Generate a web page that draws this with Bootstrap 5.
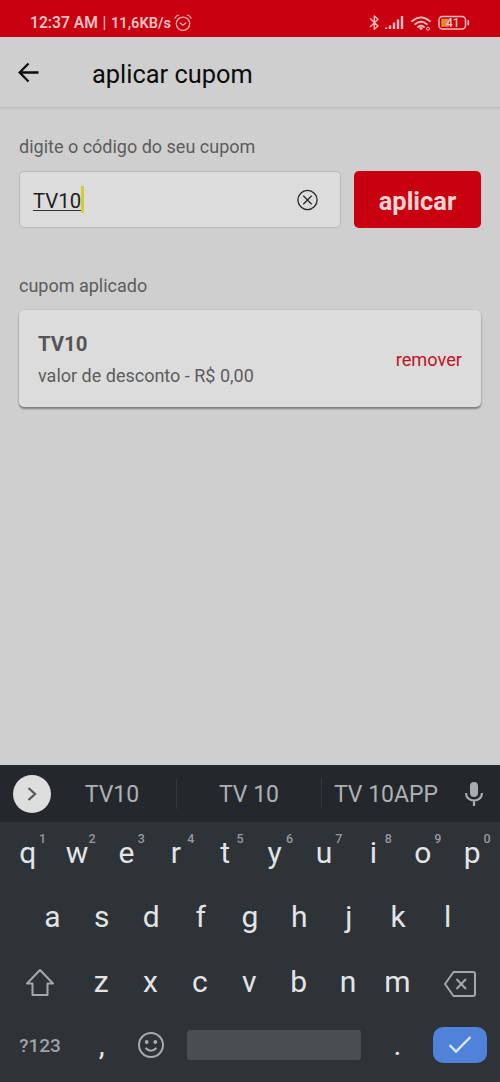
<!DOCTYPE html>
<html lang="pt-BR">
<head>
<meta charset="utf-8">
<meta name="viewport" content="width=device-width, initial-scale=1">
<title>aplicar cupom</title>
<link href="https://cdn.jsdelivr.net/npm/bootstrap@5.3.0/dist/css/bootstrap.min.css" rel="stylesheet">
<style>
body{font-family:Roboto,"Liberation Sans",sans-serif;background:#cfcfcf;color:#5c5c5c;height:1082px;overflow:hidden;line-height:1}
svg{display:block;flex:none}
.status{height:37px;background:#c8000f;color:#f6c3c3;padding:9px 29px 0 30px;font-size:15.6px;font-weight:600}
.clock{line-height:18px;padding-top:5px;width:141px}
.rate{font-size:14.6px}
.topbar{height:71px;padding-left:18px;color:#0c0c0c;border-bottom:1px solid #bebebe;box-shadow:0 1px 2px rgba(0,0,0,.06)}
.topbar h1{font-size:25.4px;font-weight:400;margin:5px 0 0 52px;line-height:1}
main{padding:0 19px}
.lbl{font-size:18px;line-height:22px}
.field{width:322px;height:57px;background:#dcdcdc;border:1px solid #b9b9b9;border-radius:5px;padding:0 21px 0 13px;color:#1e1e1e}
.typed{font-size:20.4px;line-height:24px;border-bottom:1px solid #333;height:22px;margin-top:1px}
.caret{width:2.500px;height:27px;background:#d6cc28}
.apply{width:127px;height:57px;border-radius:5px;background:#c8000f;color:#f5d3d3;font-size:25.4px;font-weight:700;border:0;line-height:1}
.apply span{display:block;padding-top:4px}
.coupon{height:97px;background:#dcdcdc;border:0;border-radius:5px;box-shadow:0 2px 2px rgba(0,0,0,.38),0 0 2px rgba(0,0,0,.12);padding:2px 19px 0 19px}
.code{font-size:20.4px;line-height:24px;font-weight:700;color:#555}
.remove{color:#c2121f;font-size:18.2px;padding-top:1px}
.keyboard{height:317px;background:#2e3338;color:#e2e4e6}
.suggest{height:57px;background:#24282c;color:#aeb1b4;font-size:23px}
.more{width:38px;height:38px;background:#dedede;margin-left:13px}
.word{height:31px;padding-top:2px}
.word+.word{border-left:1px solid #34383c}
.keys{padding:0 3px;height:64.5px}
.key{width:49.4px;font-size:30px;text-align:center;position:relative;line-height:36px;flex:none}
.key sup{position:absolute;left:36px;top:-3px;font-size:12.5px;line-height:14px;font-weight:500;color:#96999d}
.sym{font-size:19px;font-weight:500;color:#a0a3a6;width:74px}
.space{width:174px;height:30px;background:#4a4e52;border-radius:3px}
.enter{width:54px;height:36px;background:#4f82d8;border-radius:10px}
</style>
</head>
<body class="d-flex flex-column">
<div class="status d-flex justify-content-between">
  <div class="d-flex" style="gap:3px"><span class="text-nowrap clock d-flex justify-content-between"><span>12:37 AM</span><span class="fw-normal">|</span><span class="rate">11,6KB/s</span></span>
    <svg style="margin-top:5px" width="18" height="18" viewBox="0 0 18 18" fill="none" stroke="#f0a8aa" stroke-width="1.3" stroke-linecap="round"><circle cx="9" cy="9.8" r="6.7"/><path d="M1 4.2Q2 1.7 4.500 1.200M17 4.2Q16 1.7 13.500 1.200M6.200 9L9 11.200L11.800 9"/></svg>
  </div>
  <svg width="102" height="22" viewBox="0 0 102 22" fill="none" stroke="#f6bcbd" stroke-width="1.5" stroke-linejoin="round" stroke-linecap="round">
    <path d="M1.500 9.800L9 17L5.300 20.200V7L9 10.200L1.500 17.400" stroke-width="1.4"/>
    <path d="M17.200 20V18.500M21 20V16.500M25 20V13.500M29 20V10.500M33 20V7" stroke-width="2.400" stroke-linecap="butt"/>
    <path d="M43 12.200Q52 4.500 61 12.200M46 15.200Q52 10.200 58 15.200M49 18Q52 15.600 55 18" stroke-width="1.800"/><path d="M51 19L52 20.200L53 19Z"/>
    <circle cx="59" cy="19.700" r="1.500" stroke-width="1"/>
    <rect x="70" y="7.500" width="26.500" height="12.500" rx="3.500"/><path d="M99.300 12V15.500" stroke-width="1.800"/>
    <rect x="72.300" y="9.800" width="7.500" height="8" fill="#df8a35" stroke="none"/>
    <text x="77" y="18" font-size="12" font-weight="500" fill="#f6c3c3" stroke="none">41</text>
  </svg>
</div>
<header class="topbar d-flex align-items-center flex-shrink-0">
  <svg width="22" height="22" viewBox="0 0 22 22" fill="none" stroke="#0c0c0c" stroke-width="2.300"><path d="M20.500 11.500H2M10.500 2.500L1.700 11.500L10.500 20.500"/></svg>
  <h1>aplicar cupom</h1>
</header>
<main class="flex-grow-1">
  <div class="lbl" style="padding-top:28px">digite o código do seu cupom</div>
  <div class="d-flex justify-content-between" style="margin-top:13px">
    <div class="field d-flex align-items-center">
      <span class="typed">TV10</span><span class="caret"></span>
      <svg class="ms-auto" width="22" height="22" viewBox="0 0 22 22" fill="none" stroke="#2a2a2a" stroke-width="1.300"><circle cx="10.500" cy="11" r="9.600"/><path d="M6.300 6.800L14.700 15.200M14.700 6.800L6.300 15.200"/></svg>
    </div>
    <button class="apply p-0"><span>aplicar</span></button>
  </div>
  <div class="lbl" style="margin-top:47px">cupom aplicado</div>
  <div class="coupon card flex-row align-items-center justify-content-between" style="margin-top:13px">
    <div><div class="code">TV10</div><div class="lbl" style="margin-top:9px">valor de desconto - R$ 0,00</div></div>
    <span class="remove">remover</span>
  </div>
</main>
<section class="keyboard flex-shrink-0">
  <div class="suggest d-flex align-items-center">
    <div class="more rounded-circle d-flex align-items-center justify-content-center"><svg width="12" height="16" viewBox="0 0 12 16" fill="none" stroke="#55585a" stroke-width="2.200"><path d="M2.500 2L9 8L2.500 14"/></svg></div>
    <div class="word d-flex align-items-center justify-content-center" style="width:125px;padding-right:3px">TV10</div>
    <div class="word d-flex align-items-center justify-content-center" style="width:145px">TV 10</div>
    <div class="word d-flex align-items-center justify-content-center text-nowrap" style="width:129px">TV 10APP</div>
    <svg style="margin-left:14px" width="20" height="26" viewBox="0 0 20 26" fill="none" stroke="#a9acaf" stroke-width="2.200"><rect x="6" y="1" width="8" height="15" rx="4" fill="#a9acaf" stroke="none"/><path d="M2 12C2 22 18 22 18 12M10 19.500V25"/></svg>
  </div>
  <div class="keys d-flex" style="padding-top:13px">
    <div class="key">q<sup>1</sup></div><div class="key">w<sup>2</sup></div><div class="key">e<sup>3</sup></div><div class="key">r<sup>4</sup></div><div class="key">t<sup>5</sup></div><div class="key">y<sup>6</sup></div><div class="key">u<sup>7</sup></div><div class="key">i<sup>8</sup></div><div class="key">o<sup>9</sup></div><div class="key">p<sup>0</sup></div>
  </div>
  <div class="keys d-flex justify-content-center" style="padding-top:12px">
    <div class="key">a</div><div class="key">s</div><div class="key">d</div><div class="key">f</div><div class="key">g</div><div class="key">h</div><div class="key">j</div><div class="key">k</div><div class="key">l</div>
  </div>
  <div class="keys d-flex" style="padding-top:12.500px">
    <div class="d-flex justify-content-center" style="width:73.500px;padding-top:4.500px"><svg width="30" height="30" viewBox="0 0 30 30" fill="none" stroke="#a5a8ab" stroke-width="2" stroke-linejoin="round"><path d="M15 2L28 15.500H22.500V27H7.500V15.500H2Z"/></svg></div>
    <div class="key">z</div><div class="key">x</div><div class="key">c</div><div class="key">v</div><div class="key">b</div><div class="key">n</div><div class="key">m</div>
    <div class="d-flex justify-content-center" style="width:75px;padding-top:6px"><svg width="34" height="28" viewBox="0 0 34 28" fill="none" stroke="#a5a8ab" stroke-width="2" stroke-linejoin="round"><path d="M10.500 2H30Q32 2 32 4V24Q32 26 30 26H10.500L2 14Z"/><path d="M13.500 9L23 19M23 9L13.500 19"/></svg></div>
  </div>
  <div class="keys d-flex align-items-center" style="height:59px">
    <div class="sym text-center">?123</div>
    <div class="key">,</div>
    <div class="key d-flex justify-content-center"><svg width="28" height="28" viewBox="0 0 28 28" fill="none" stroke="#a9acaf" stroke-width="2"><circle cx="14" cy="14" r="12"/><path d="M8.500 17Q14 22.500 19.500 17"/><g fill="#a9acaf" stroke="none"><circle cx="9.700" cy="11" r="1.900"/><circle cx="18.300" cy="11" r="1.900"/></g></svg></div>
    <div class="space" style="margin-left:11px"></div>
    <div class="key" style="margin-left:12px">.</div>
    <div class="enter d-flex align-items-center justify-content-center" style="margin-left:11px"><svg width="24" height="20" viewBox="0 0 24 20" fill="none" stroke="#dfe8f7" stroke-width="2.300"><path d="M1.500 10L8 16.500L22.500 2"/></svg></div>
  </div>
</section>
<script src="https://cdn.jsdelivr.net/npm/bootstrap@5.3.0/dist/js/bootstrap.bundle.min.js"></script>
</body>
</html>
